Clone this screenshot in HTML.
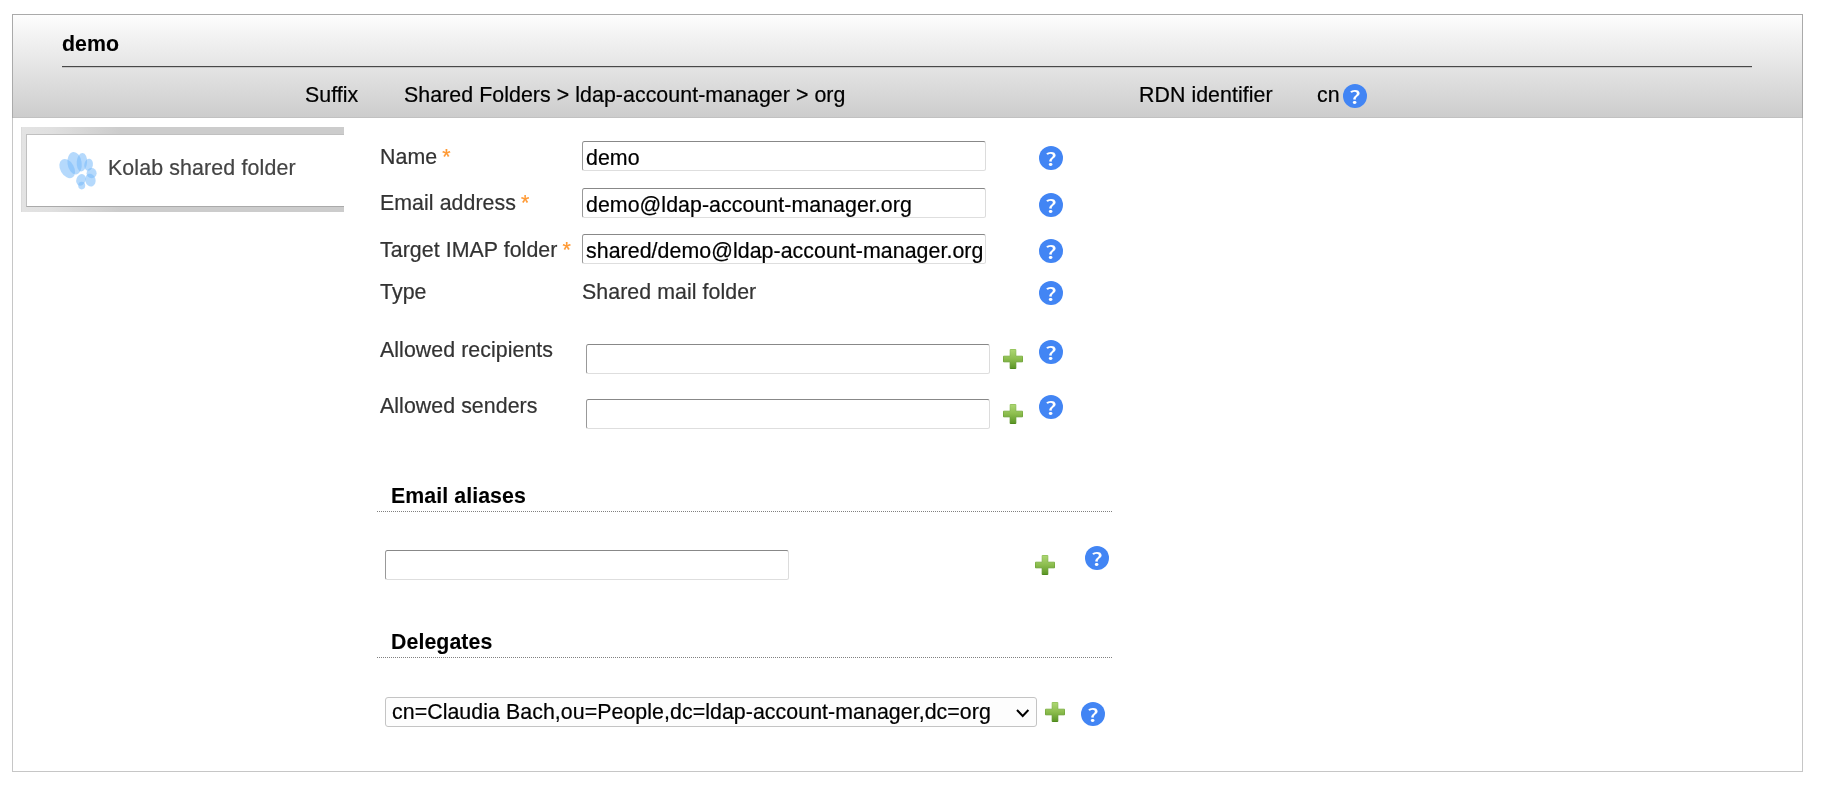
<!DOCTYPE html>
<html><head><meta charset="utf-8"><title>demo</title>
<style>
html,body{margin:0;padding:0;background:#fff;}
body{will-change:transform;width:1830px;height:794px;position:relative;overflow:hidden;font-family:"Liberation Sans",sans-serif;font-size:21.33px;letter-spacing:0.065px;color:#000;}
.abs{position:absolute;white-space:nowrap;line-height:24px;}
.abs,.inp{-webkit-text-stroke:0.22px;}
#box{position:absolute;left:12px;top:14px;width:1789px;height:756px;border:1px solid #c6c6c6;background:#fff;}
#hdr{position:absolute;left:12px;top:14px;width:1789px;height:103px;border:1px solid #aaa;border-bottom:none;background:linear-gradient(to bottom,#fdfdfd 0%,#cccccc 100%);box-shadow:inset 0 -1px 0 rgba(0,0,0,0.05);}
#hr{position:absolute;left:62px;top:66px;width:1690px;height:1px;background:#484848;box-shadow:0 1px 0 rgba(0,0,0,0.13);}
.lbl{color:#333;}
.req{color:#ff9933;margin-left:5px;}
.inp{position:absolute;box-sizing:border-box;height:30px;border:1px solid;border-color:#888 #dcdcdc #dedede #999;border-radius:2.5px;background:#fff;font-family:"Liberation Sans",sans-serif;font-size:21.33px;letter-spacing:0.065px;color:#000;padding:2px 0 0 3px;line-height:28px;white-space:nowrap;overflow:hidden;}
.help{position:absolute;width:24px;height:24px;border-radius:50%;background:#4285f4;color:#fff;font-family:"Noto Sans CJK SC","Liberation Sans",sans-serif;font-weight:500;font-size:18px;line-height:24px;text-align:center;}
.help span{display:inline-block;transform:translateX(-0.4px) scaleX(1.3);}
.plus{position:absolute;width:20px;height:20px;}
.inp i{display:block;font-style:normal;overflow:hidden;margin-right:3px;}
.sect{font-weight:bold;color:#000;-webkit-text-stroke:0.08px;}
.dot{position:absolute;height:0;border-top:1px dotted #808080;}
#tab{position:absolute;left:21px;top:127px;width:323px;height:85px;background:linear-gradient(to right,#e3e3e3 0px,#e0e0e0 30px,#cccccc 100px);box-shadow:inset 1px 0 0 rgba(0,0,0,0.03);}
#tabin{position:absolute;left:26px;top:134px;width:318px;height:73px;box-sizing:border-box;border:1px solid #c0c0c0;border-bottom-color:#aaa;border-right:none;background:#fff;}
</style></head><body>
<svg width="0" height="0" style="position:absolute"><defs>
<linearGradient id="pg" x1="0" y1="0" x2="0" y2="1"><stop offset="0" stop-color="#add772"/><stop offset="0.5" stop-color="#8cbd4e"/><stop offset="1" stop-color="#5a9524"/></linearGradient>
<linearGradient id="ps" x1="0" y1="0" x2="0" y2="1"><stop offset="0" stop-color="#97c55f"/><stop offset="0.5" stop-color="#7aad40"/><stop offset="1" stop-color="#4f8a1c"/></linearGradient>
<symbol id="plus" viewBox="0 0 20 20"><path d="M7.2 0.5h5.6v6.7h6.7v5.6h-6.7v6.7h-5.6v-6.7h-6.7v-5.6h6.7z" fill="url(#pg)" stroke="url(#ps)" stroke-width="1" stroke-linejoin="round"/></symbol>
</defs></svg>
<div id="box"></div>
<div id="hdr"></div>
<div class="abs" style="left:62px;top:32px;font-weight:bold;-webkit-text-stroke:0.08px;">demo</div>
<div id="hr"></div>
<div class="abs" style="left:305px;top:83px;">Suffix</div>
<div class="abs" style="left:404px;top:83px;">Shared Folders &gt; ldap-account-manager &gt; org</div>
<div class="abs" style="left:1139px;top:83px;">RDN identifier</div>
<div class="abs" style="left:1317px;top:83px;">cn</div>

<div id="tab"></div><div id="tabin"></div>
<svg style="position:absolute;left:56px;top:149px;width:44px;height:44px;filter:blur(0.5px)" viewBox="0 0 44 44"><g fill="#79b9fa" fill-opacity="0.55"><ellipse cx="11.2" cy="19.6" rx="6.9" ry="10.3" transform="rotate(-30 11.2 19.6)"/><ellipse cx="18.6" cy="14.2" rx="7.1" ry="11.3" transform="rotate(-8 18.6 14.2)"/><ellipse cx="25.9" cy="13.2" rx="5.2" ry="9.3" transform="rotate(5 25.9 13.2)"/><ellipse cx="32.6" cy="15.8" rx="4.3" ry="6.1" transform="rotate(10 32.6 15.8)"/><ellipse cx="35.6" cy="24.2" rx="5.0" ry="5.1" transform="rotate(0 35.6 24.2)"/><ellipse cx="34.4" cy="31.1" rx="5.2" ry="6.5" transform="rotate(-15 34.4 31.1)"/><ellipse cx="25.0" cy="30.8" rx="4.6" ry="6.0" transform="rotate(20 25.0 30.8)"/><ellipse cx="25.7" cy="36.6" rx="3.5" ry="3.8" transform="rotate(0 25.7 36.6)"/></g></svg>
<div class="abs" style="left:108px;top:156px;color:#444;letter-spacing:0.14px;">Kolab shared folder</div>

<div class="abs lbl" style="left:380px;top:145px;">Name<span class="req">*</span></div>
<div class="abs lbl" style="left:380px;top:191px;">Email address<span class="req">*</span></div>
<div class="abs lbl" style="left:380px;top:238px;">Target IMAP folder<span class="req">*</span></div>
<div class="abs lbl" style="left:380px;top:280px;">Type</div>
<div class="abs lbl" style="left:582px;top:280px;">Shared mail folder</div>
<div class="abs lbl" style="left:380px;top:338px;">Allowed recipients</div>
<div class="abs lbl" style="left:380px;top:394px;">Allowed senders</div>

<div class="inp" style="left:582px;top:141px;width:404px;"><i>demo</i></div>
<div class="inp" style="left:582px;top:188px;width:404px;"><i>demo@ldap-account-manager.org</i></div>
<div class="inp" style="left:582px;top:234px;width:404px;"><i>shared/demo@ldap-account-manager.org</i></div>
<div class="inp" style="left:586px;top:344px;width:404px;"></div>
<div class="inp" style="left:586px;top:399px;width:404px;"></div>

<div class="abs sect" style="left:391px;top:484px;">Email aliases</div>
<div class="dot" style="left:377px;top:511px;width:735px;"></div>
<div class="inp" style="left:385px;top:550px;width:404px;"></div>
<div class="abs sect" style="left:391px;top:630px;">Delegates</div>
<div class="dot" style="left:377px;top:657px;width:735px;"></div>
<div class="inp" style="left:385px;top:697px;width:652px;padding:0 0 0 6px;border-color:#c4c4c4;border-radius:3px;background:#fdfdfd;"><i>cn=Claudia Bach,ou=People,dc=ldap-account-manager,dc=org</i></div>
<div class="help" style="left:1343px;top:84px;"><span>?</span></div>
<div class="help" style="left:1039px;top:146px;"><span>?</span></div>
<div class="help" style="left:1039px;top:193px;"><span>?</span></div>
<div class="help" style="left:1039px;top:239px;"><span>?</span></div>
<div class="help" style="left:1039px;top:281px;"><span>?</span></div>
<div class="help" style="left:1039px;top:340px;"><span>?</span></div>
<div class="help" style="left:1039px;top:395px;"><span>?</span></div>
<div class="help" style="left:1085px;top:546px;"><span>?</span></div>
<div class="help" style="left:1081px;top:702px;"><span>?</span></div>
<svg class="plus" style="left:1003px;top:349px;"><use href="#plus"/></svg>
<svg class="plus" style="left:1003px;top:404px;"><use href="#plus"/></svg>
<svg class="plus" style="left:1035px;top:555px;"><use href="#plus"/></svg>
<svg class="plus" style="left:1045px;top:702px;"><use href="#plus"/></svg>
<svg style="position:absolute;left:1014px;top:706px;width:18px;height:14px" viewBox="0 0 18 14"><path d="M3 4 L8.7 10 L14.4 4" fill="none" stroke="#000" stroke-width="2"/></svg>
</body></html>
